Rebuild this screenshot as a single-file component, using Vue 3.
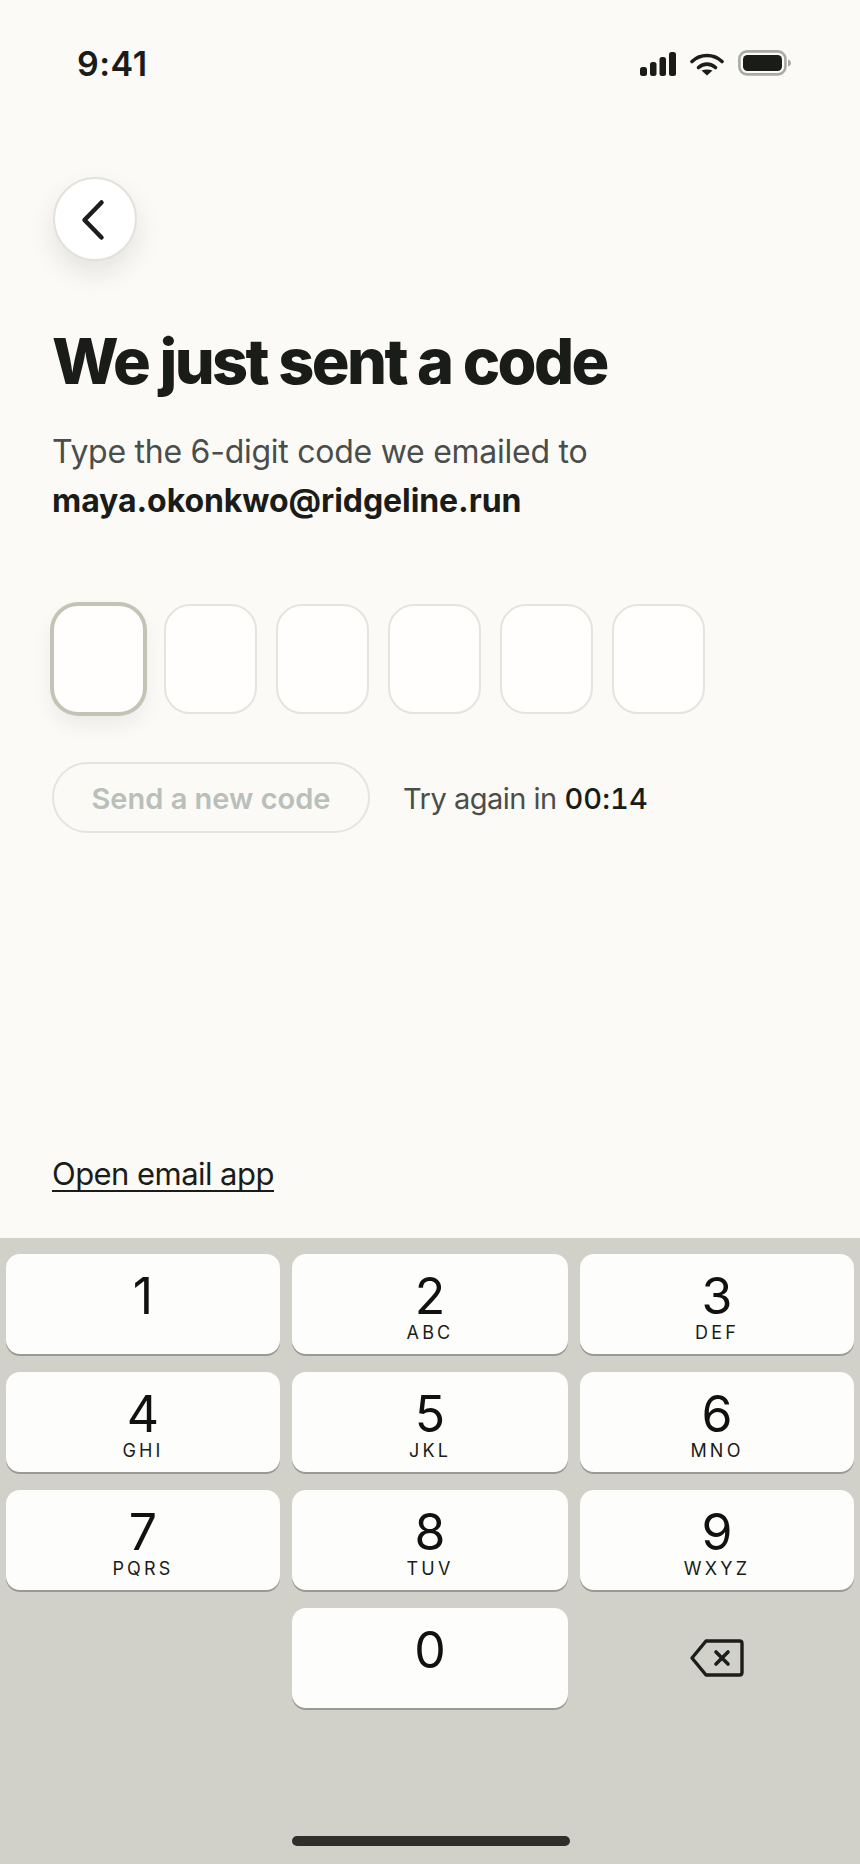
<template>
  <div class="phone">
    <div class="status">
      <span class="time">9:41</span>
      <div class="status-icons">
        <svg width="36" height="24" viewBox="0 0 36 24">
          <rect x="0" y="15" width="7" height="9" rx="2.5" />
          <rect x="10" y="10" width="6.5" height="14" rx="2.5" />
          <rect x="19.5" y="5" width="6.5" height="19" rx="2.5" />
          <rect x="29" y="0" width="7" height="24" rx="2.5" />
        </svg>
        <svg width="34" height="24" viewBox="0 0 34 24">
          <path d="M2 9.5C10.5 1.5 23.5 1.5 32 9.5" fill="none" stroke="#1c1e1b" stroke-width="3.6" stroke-linecap="round" />
          <path d="M8.5 15.5C13.5 11 20.5 11 25.5 15.5" fill="none" stroke="#1c1e1b" stroke-width="3.6" stroke-linecap="round" />
          <path d="M11.5 18.5Q17 16.5 22.5 18.5L17 23.5Z" />
        </svg>
        <svg class="battery" width="54" height="26" viewBox="0 0 54 26">
          <rect x="1.4" y="1.4" width="46" height="23" rx="7.5" fill="none" stroke="#a9aaa6" stroke-width="2.6" />
          <rect x="5" y="5" width="39" height="16" rx="4.5" />
          <path d="M50 9.5C52 10 53 11.5 53 13S52 16 50 16.5Z" fill="#a9aaa6" />
        </svg>
      </div>
    </div>

    <main class="content">
      <button class="back" type="button" aria-label="Back">
        <svg width="30" height="44" viewBox="0 0 30 44">
          <path d="M21.5 5.500 4.500 23 21.500 40.500" fill="none" stroke="#1c1e1b" stroke-width="4.500" stroke-linecap="round" stroke-linejoin="round" />
        </svg>
      </button>
      <h1>We just sent a code</h1>
      <p class="lead">Type the 6-digit code we emailed to<br /><strong>maya.okonkwo@ridgeline.run</strong></p>
      <div class="code">
        <div v-for="n in 6" :key="n" class="cell" :class="{ active: n === 1 }"></div>
      </div>
      <div class="resend">
        <button class="resend-btn" type="button" disabled>Send a new code</button>
        <span class="timer">Try again in <b>00:14</b></span>
      </div>
      <a class="email-link" href="#">Open email app</a>
    </main>

    <section class="keyboard">
      <div class="keys">
        <template v-for="k in keys" :key="k.num">
          <div class="key" :class="{ blank: !k.num }">
            <span class="num">{{ k.num }}</span>
            <span v-if="k.sub" class="sub">{{ k.sub }}</span>
          </div>
        </template>
        <div class="erase">
          <svg width="56" height="38" viewBox="0 0 56 38">
            <path d="M17 2H50.500C52 2 53 3 53 4.500V33.500C53 35 52 36 50.500 36H17L3 19Z" fill="none" stroke="#1c1e1b" stroke-width="3.400" stroke-linejoin="round" />
            <path d="M27 13 39 25M39 13 27 25" fill="none" stroke="#1c1e1b" stroke-width="3.600" stroke-linecap="round" />
          </svg>
        </div>
      </div>
      <div class="home-bar"></div>
    </section>
  </div>
</template>

<script setup>
const keys = [
  { num: "1", sub: "" },
  { num: "2", sub: "ABC" },
  { num: "3", sub: "DEF" },
  { num: "4", sub: "GHI" },
  { num: "5", sub: "JKL" },
  { num: "6", sub: "MNO" },
  { num: "7", sub: "PQRS" },
  { num: "8", sub: "TUV" },
  { num: "9", sub: "WXYZ" },
  { num: "", sub: "" },
  { num: "0", sub: "" },
];
</script>

<style>
html,
body {
  margin: 0;
  background: #fbfaf6;
}
</style>

<style scoped>
.phone {
  width: 860px;
  height: 1864px;
  display: flex;
  flex-direction: column;
  background: #fbfaf6;
  color: #1a1c19;
  font-family: Inter, "Liberation Sans", sans-serif;
  overflow: hidden;
}

.status {
  height: 127px;
  box-sizing: border-box;
  padding: 45px 68px 0 77px;
  display: flex;
  justify-content: space-between;
  align-items: flex-start;
  flex: none;
}
.time {
  font-size: 34px;
  line-height: 38px;
  font-weight: 600;
  letter-spacing: 0.5px;
}
.status-icons {
  display: flex;
  align-items: flex-start;
  gap: 14px;
  padding-top: 7px;
  fill: #1a1c19;
}
.battery {
  margin-top: -2px;
}

.content {
  flex: 1;
  display: flex;
  flex-direction: column;
  align-items: flex-start;
  padding: 50px 52px 0;
}
.back {
  width: 84px;
  height: 84px;
  margin-left: 1px;
  padding: 0;
  border: 2px solid #e2e1db;
  border-radius: 50%;
  background: #fff;
  box-shadow: 0 12px 26px rgba(28, 30, 27, 0.1);
  display: flex;
  align-items: center;
  justify-content: center;
}
h1 {
  margin: 62px 0 0;
  font-size: 63px;
  line-height: 76px;
  font-weight: 800;
  letter-spacing: -2.6px;
}
.lead {
  margin: 29px 0 0;
  font-size: 32px;
  line-height: 48.5px;
  letter-spacing: -0.26px;
  color: #4a4e4a;
}
.lead strong {
  color: #1a1c19;
  font-weight: 700;
  letter-spacing: -0.07px;
}
.code {
  display: flex;
  gap: 19px;
  margin-top: 79px;
}
.cell {
  width: 93px;
  height: 110px;
  box-sizing: border-box;
  border: 2px solid #e5e4df;
  border-radius: 26px;
  background: #fffefc;
}
.cell.active {
  border-color: #c4c4b6;
  box-shadow: 0 0 0 2px #c4c4b6, 0 10px 20px rgba(28, 30, 27, 0.07);
}
.resend {
  display: flex;
  align-items: center;
  gap: 33px;
  margin-top: 48px;
}
.resend-btn {
  width: 318px;
  height: 71px;
  padding: 2px 0 0;
  border: 2px solid #e5e4df;
  border-radius: 36px;
  background: transparent;
  color: #b9bfba;
  font: 600 29px Inter, "Liberation Sans", sans-serif;
}
.timer {
  padding-top: 2px;
  font-size: 29px;
  letter-spacing: -0.5px;
  color: #4a4e4a;
}
.timer b {
  font-weight: 500;
  font-variant-numeric: tabular-nums;
  letter-spacing: 0.1px;
  color: #1a1c19;
}
.email-link {
  margin-top: auto;
  margin-bottom: 46px;
  font-size: 31px;
  line-height: 32px;
  letter-spacing: -0.55px;
  color: #1a1c19;
  text-decoration: none;
  border-bottom: 2px solid #1a1c19;
}

.keyboard {
  flex: none;
  height: 626px;
  box-sizing: border-box;
  padding: 16px 6px 0;
  background: #d1d1ca;
  display: flex;
  flex-direction: column;
}
.keys {
  display: grid;
  grid-template-columns: 274px 276px 274px;
  grid-auto-rows: 100px;
  gap: 18px 12px;
}
.key {
  display: flex;
  flex-direction: column;
  align-items: center;
  border-radius: 14px;
  background: #fdfdfb;
  box-shadow: 0 2px 0 #9a9a94;
}
.key.blank {
  background: none;
  box-shadow: none;
}
.num {
  margin-top: 17px;
  font-size: 50px;
  line-height: 50px;
  color: #111;
}
.sub {
  font-size: 18px;
  line-height: 18px;
  letter-spacing: 3.2px;
  margin-top: 3px;
  color: #1a1c19;
}
.erase {
  display: flex;
  align-items: center;
  justify-content: center;
}
.home-bar {
  width: 278px;
  height: 10px;
  margin: auto 0 18px 286px;
  border-radius: 5px;
  background: #2f302b;
}
</style>
